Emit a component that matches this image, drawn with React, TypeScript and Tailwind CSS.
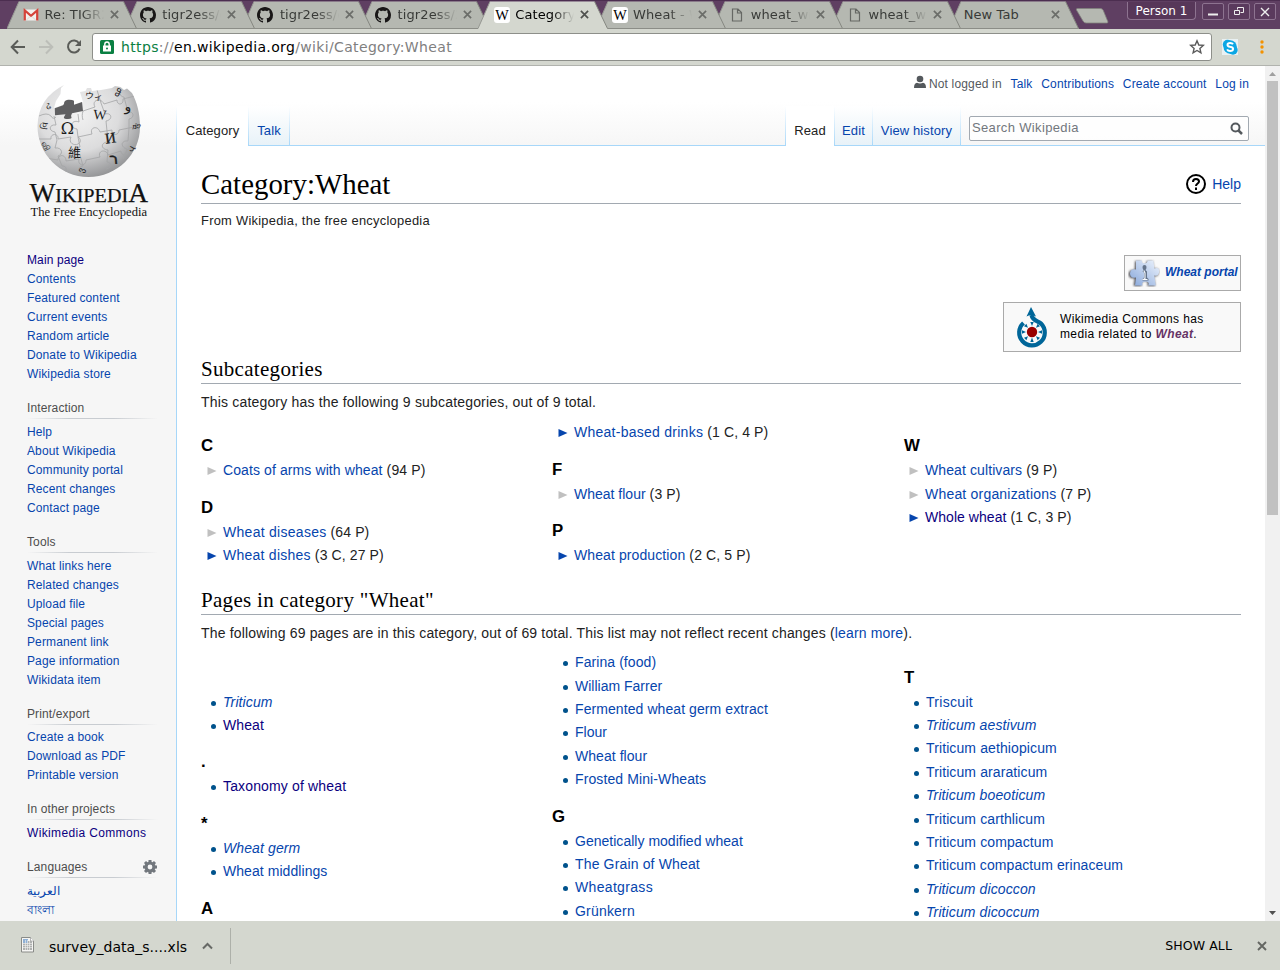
import React from "react";

const SANS = "font-['Liberation_Sans',Arial,sans-serif]";
const SERIF = "font-['Liberation_Serif',serif]";
const UI = "font-['DejaVu_Sans',sans-serif]";

type TabKind = "gmail" | "github" | "wiki" | "file" | "none";

function TabIcon({ kind }: { kind: TabKind }) {
  if (kind === "gmail")
    return (
      <svg width="16" height="16" viewBox="0 0 16 16" className="shrink-0">
        <path d="M1 2.500h14v11H1z" fill="#f3f1ee" />
        <path d="M1.800 13.500V3.500L8 8.800l6.200-5.300v10" fill="none" stroke="#d5433a" strokeWidth="2.200" />
        <path d="M3 13.500l4-4M13 13.500l-4-4" stroke="#d0ccc8" strokeWidth=".7" />
      </svg>
    );
  if (kind === "github")
    return (
      <svg width="16" height="16" viewBox="0 0 16 16" className="-ml-px mr-px shrink-0">
        <path
          fill="#191717"
          d="M8 0C3.58 0 0 3.58 0 8c0 3.54 2.29 6.53 5.47 7.59.4.07.55-.17.55-.38 0-.19-.01-.82-.01-1.49-2.01.37-2.53-.49-2.69-.94-.09-.23-.48-.94-.82-1.13-.28-.15-.68-.52-.01-.53.63-.01 1.08.58 1.23.82.72 1.21 1.87.87 2.33.66.07-.52.28-.87.51-1.07-1.78-.2-3.64-.89-3.64-3.95 0-.87.31-1.59.82-2.15-.08-.2-.36-1.02.08-2.12 0 0 .67-.21 2.2.82.64-.18 1.32-.27 2-.27s1.36.09 2 .27c1.53-1.04 2.2-.82 2.2-.82.44 1.1.16 1.92.08 2.12.51.56.82 1.27.82 2.15 0 3.07-1.87 3.75-3.65 3.95.29.25.54.73.54 1.48 0 1.07-.01 1.93-.01 2.2 0 .21.15.46.55.38A8.01 8.01 0 0 0 16 8c0-4.42-3.58-8-8-8z"
        />
      </svg>
    );
  if (kind === "wiki")
    return (
      <svg width="16" height="16" viewBox="0 0 16 16" className="shrink-0">
        <rect width="16" height="16" rx="3" fill="#fff" />
        <text x="8" y="12.500" textAnchor="middle" fontSize="14" textLength="13.500" lengthAdjust="spacingAndGlyphs" className={SERIF} fill="#000">W</text>
      </svg>
    );
  if (kind === "file")
    return (
      <svg width="16" height="16" viewBox="0 0 16 16" className="shrink-0">
        <path d="M3.500 2h5.500l3.500 3.500v8.500h-9zM8.500 2v4h4" fill="none" stroke="#666864" strokeWidth="1.200" />
      </svg>
    );
  return null;
}

function Cross({ color = "#6b6d69", size = 9 }: { color?: string; size?: number }) {
  return (
    <svg width={size} height={size} viewBox="0 0 9 9" className="shrink-0">
      <path d="M.9.9l7.2 7.2M8.1.9L.9 8.1" stroke={color} strokeWidth="1.700" />
    </svg>
  );
}

const tabs: { kind: TabKind; label: string; layer: string; active?: boolean }[] = [
  { kind: "gmail", label: "Re: TIGR2", layer: "z-[9]" },
  { kind: "github", label: "tigr2ess/c", layer: "z-[8]" },
  { kind: "github", label: "tigr2ess/c", layer: "z-[7]" },
  { kind: "github", label: "tigr2ess/2", layer: "z-[6]" },
  { kind: "wiki", label: "Category:", layer: "z-10", active: true },
  { kind: "wiki", label: "Wheat - W", layer: "z-[5]" },
  { kind: "file", label: "wheat_wi", layer: "z-[4]" },
  { kind: "file", label: "wheat_wi", layer: "z-[3]" },
  { kind: "none", label: "New Tab", layer: "z-[2]" },
];

function BrowserTab({ tab }: { tab: (typeof tabs)[number] }) {
  const fill = tab.active ? "#d4d7cf" : "#b5b8b1";
  return (
    <div className={`relative mr-[-12.3px] h-[29px] w-[130px] shrink-0 ${tab.layer}`}>
      <svg width="130" height="29" viewBox="0 0 130 29" className="absolute inset-0">
        <path d="M0 28.500L12 1.500H116.500L129.500 28.500V29H0z" fill={fill} />
        <path d="M0 28.500L12 1.500" stroke="#969892" fill="none" />
        <path d="M116.500 1.500L129.500 28.500" stroke="#858780" fill="none" />
        {!tab.active && <path d="M0 28.500H130" stroke="#8b8d87" />}
      </svg>
      <div className={`relative flex h-[29px] items-center ${tab.kind === "none" ? "pl-[15px]" : "pl-[16px]"}`}>
        <TabIcon kind={tab.kind} />
        <span
          className={`${UI} h-[18px] whitespace-nowrap text-[13px] leading-[18px] ${
            tab.active ? "text-black" : "text-[#393b38]"
          } ${
            tab.kind === "none"
              ? "mr-px w-[80px] tracking-[0.1px]"
              : "ml-[5.500px] w-[59px] tracking-[0.1px] [mask-image:linear-gradient(to_right,black_62%,transparent)]"
          }`}
        >
          {tab.label}
        </span>
        <span className="ml-[6px] flex h-[29px] items-center">
          <Cross color={tab.active ? "#4f514e" : "#6b6d69"} />
        </span>
      </div>
    </div>
  );
}

function WindowButton({ children }: { children: React.ReactNode }) {
  return (
    <span className="flex h-[17px] w-[22px] items-center justify-center rounded-[2px] border border-[#8d7390] bg-[#5a3a5d]">
      {children}
    </span>
  );
}

function TitleBar() {
  return (
    <div className="flex h-[29px] shrink-0 border-t border-[#4c2e50] bg-[#5f3f62]">
      <div className="mt-[-1px] flex pl-[7px]">
        {tabs.map((t, i) => (
          <BrowserTab key={i} tab={t} />
        ))}
      </div>
      <svg width="34" height="18" viewBox="0 0 34 18" className="ml-[9px] mt-[5px] shrink-0">
        <path d="M2.500 2.500h23q2 0 2.800 2l4.500 11q.5 1.500-1 1.500H11q-2 0-3-2L1.500 4q-.7-1.500 1-1.500z" fill="#b5b8b1" stroke="#80837c" strokeWidth=".8" />
      </svg>
      <div className="ml-auto flex pr-[4px]">
        <div className={`${UI} mr-[6px] mt-px flex h-[18px] w-[69px] items-center justify-center rounded-b-[4px] border border-t-0 border-[#8d7390] bg-[#573759] pt-px text-[12px] text-white`}>
          Person 1
        </div>
        <div className="mt-[2px] flex gap-1">
          <WindowButton>
            <svg width="10" height="10"><path d="M0 7.500h10" stroke="#eee" strokeWidth="2" /></svg>
          </WindowButton>
          <WindowButton>
            <svg width="10" height="9" fill="none" stroke="#eee"><path d="M3.500 2.500v-2h6v5h-3M.5 3.500h5v4h-5z" /></svg>
          </WindowButton>
          <WindowButton>
            <svg width="10" height="10"><path d="M1 1l8 8M9 1L1 9" stroke="#eee" strokeWidth="1.400" /></svg>
          </WindowButton>
        </div>
      </div>
    </div>
  );
}

function Toolbar() {
  return (
    <div className="flex h-[37px] shrink-0 items-start border-b border-[#b1b3ae] bg-[#d4d7cf] pl-[10px] pt-1">
      <svg width="76" height="28" viewBox="0 0 76 28" fill="none" strokeWidth="2">
        <path d="M15 14H2M8 7.500L1.700 14 8 20.500" stroke="#5a5c58" />
        <path d="M29 14h13M36 7.500l6.300 6.500-6.300 6.500" stroke="#bcbeb8" />
        <path d="M69 10.200a6 6 0 1 0 .6 5.500" stroke="#5a5c58" />
        <path d="M71 7v6h-6z" fill="#5a5c58" />
      </svg>
      <div className="ml-[6px] flex h-[28px] w-[1120px] items-center rounded-[3px] border border-[#8d8f8a] bg-white pl-[7px] pr-[6px]">
        <svg width="14" height="14" viewBox="0 0 14 14">
          <rect width="14" height="14" rx="1.500" fill="#0b8043" />
          <path d="M4.800 6V4.200a2.200 2.200 0 0 1 4.400 0V6" fill="none" stroke="#fff" strokeWidth="1.400" />
          <rect x="3" y="5.500" width="8" height="6" fill="#fff" />
          <circle cx="7" cy="8.500" r="1" fill="#0b8043" />
        </svg>
        <span className={`${UI} ml-[7px] whitespace-nowrap text-[14px] tracking-[0.35px] text-[#808080]`}>
          <span className="text-[#0b8043]">https</span>://<span className="text-black">en.wikipedia.org</span>/wiki/Category:Wheat
        </span>
        <svg width="16" height="16" viewBox="0 0 16 16" className="ml-auto">
          <path d="M8 1.800l1.800 4.200 4.500.4-3.400 3 1 4.400L8 11.500l-3.900 2.300 1-4.400-3.400-3L6.200 6z" fill="none" stroke="#5a5a5a" strokeWidth="1.400" />
        </svg>
      </div>
      <svg width="16" height="16" viewBox="0 0 16 16" className="ml-[10px] mt-[6px]">
        <rect width="16" height="16" fill="#e9f1f3" />
        <circle cx="5.500" cy="5.500" r="4.700" fill="#0ca7e4" />
        <circle cx="11" cy="11" r="4.700" fill="#0ca7e4" />
        <circle cx="8.200" cy="8" r="6.700" fill="#0ca7e4" />
        <path d="M11 5.300Q10.300 4 8.200 4 5.500 4 5.500 5.900q0 1.400 2.600 1.900 3 .5 3 2.200 0 2-3 2-2.300 0-3-1.700" fill="none" stroke="#fff" strokeWidth="1.900" />
      </svg>
      <svg width="4" height="14" viewBox="0 0 4 14" className="ml-[22px] mt-[7px]" fill="#f39200">
        <circle cx="2" cy="2" r="1.700" /><circle cx="2" cy="7" r="1.700" /><circle cx="2" cy="12" r="1.700" />
      </svg>
    </div>
  );
}

const BALL =
  "M43 19Q17 32 16.500 60C16.500 88 39 111 67.500 111S119 88 119 61C119 47 116 36 111 27L106 22.500l-3 1.500-3.500-3-5.500-1-3 2-11 2-9 1-1-3h-4l-1.500 3-5.500 1 3 10-9 3v-3.500q-3-3-9 0l-2 3.500-9 3 2-7 4.500-7 .5-6z";

function WikiLogo() {
  return (
    <svg width="135" height="155" viewBox="0 0 135 155" className="mx-auto block">
      <defs>
        <radialGradient id="globe" cx="40%" cy="32%" r="72%">
          <stop offset="0" stopColor="#f2f2f2" />
          <stop offset=".55" stopColor="#dcdcdd" />
          <stop offset="1" stopColor="#8f9092" />
        </radialGradient>
        <clipPath id="ball"><path d={BALL} /></clipPath>
      </defs>
      <path d={BALL} fill="url(#globe)" />
      <g clipPath="url(#ball)" fill="none" stroke="#a3a4a6" strokeWidth=".8">
        <path d="M18 50q8-4 12 0 2 4 5 1M18 73l12 0c-1-6 8-6 7 0l13-2c-3 6 3 9 7 7s2-6 0-7l14-3c-3-7 6-9 8-2l12-2c-1 6 7 6 7 0l20-4" />
        <path d="M24 92l13 2c0-6 8-6 8 1l13-2c-2 7 7 8 7 1l14-3c-3-7 7-8 8-2l13-4c0 5 6 5 6-1l10-5" />
        <path d="M62 45l12-4c-4-7 6-10 9-3l13-4c0 6 7 5 6-1l12-3M62 45c-1 3-1 6 0 9" />
        <path d="M33 50l2 9c-7-1-8 6-1 7l2 8-2 8c7-1 9 6 3 8l4 10c5 0 5 4 3 7" />
        <path d="M57 48l1 8c-8-3-10 6-2 7l1 8 2 10c-7 0-7 8 0 8l3 11c-6 1-5 6 0 8" />
        <path d="M76 24l4 13 4 11c7-2 8 6 1 7l1 10 1 11c-7 0-8 7 0 8l-1 12c6 1 5 6-1 7" />
        <path d="M101 24c-5 4 0 7 2 7l4 15c6-1 7 6 1 7v9l-1 13c-7-1-8 6-1 8l-4 10" />
      </g>
      <path d="M33.800 42.300L42 39.300 43 38q0-4 4-4.300t6 1v4L61 36l1 9-11 2.300-1 2.700q2 3-3 3t-4-2l1.500-2.700L34 49.300z" fill="#5f5f61" />
      <g fill="#1c1c1c" textAnchor="middle">
        <text x="46.500" y="67.500" fontSize="16" className="font-['DejaVu_Serif',serif]">Ω</text>
        <text x="79" y="53.500" fontSize="14" transform="rotate(4 79 49)" className={SERIF}>W</text>
        <text x="89.500" y="77" fontSize="15" transform="rotate(-8 89 72)" className={SERIF} stroke="#1c1c1c" strokeWidth=".3">И</text>
        <text x="53.500" y="91" fontSize="13" className="font-['Noto_Sans_CJK_TC','Noto_Sans_CJK_JP',sans-serif]">維</text>
        <text x="92.500" y="98" fontSize="15" transform="rotate(-4 92 92)" className="font-['DejaVu_Sans',sans-serif]" stroke="#1c1c1c" strokeWidth=".5">ר</text>
        <text x="73" y="33.500" fontSize="9" transform="rotate(8 73 30)" className="font-['Noto_Sans_CJK_JP',sans-serif]">ウィ</text>
        <text x="97" y="30.500" fontSize="10" transform="rotate(24 97 27)" className="font-['DejaVu_Sans',sans-serif]">ჵ</text>
        <text x="107" y="45" fontSize="14" className="font-['DejaVu_Sans',sans-serif]">و</text>
        <text x="27" y="43" fontSize="10" transform="rotate(-20 27 39)" className="font-['DejaVu_Sans',sans-serif]">ઢ</text>
        <text x="23" y="62.500" fontSize="9" transform="rotate(-80 23 59)" className={SERIF}>વિ</text>
        <text x="25" y="83" fontSize="8.500" transform="rotate(65 25 80)" className="font-['DejaVu_Sans',sans-serif]">வி</text>
        <text x="114" y="63" fontSize="8" transform="rotate(80 114 60)" className="font-['DejaVu_Sans',sans-serif]">ཝི</text>
        <text x="60" y="107" fontSize="9" transform="rotate(-70 60 104)" className="font-['DejaVu_Sans',sans-serif]">ვ</text>
        <text x="111" y="86" fontSize="8" transform="rotate(-62 111 83)" className="font-['DejaVu_Sans',sans-serif]">Վ</text>
      </g>
      <g fill="#111" className={SERIF}>
        <text x="8.500" y="135.500" fontSize="26.500" stroke="#111" strokeWidth=".25" textLength="118.500" lengthAdjust="spacingAndGlyphs">
          W<tspan fontSize="19.500">IKIPEDI</tspan>A
        </text>
        <text x="9.500" y="150" fontSize="13.500" textLength="116.500" lengthAdjust="spacingAndGlyphs">The Free Encyclopedia</text>
      </g>
    </svg>
  );
}

const visited = ["Main page", "Wikimedia Commons"];
const portals = [
  { title: "Interaction", items: ["Help", "About Wikipedia", "Community portal", "Recent changes", "Contact page"] },
  { title: "Tools", items: ["What links here", "Related changes", "Upload file", "Special pages", "Permanent link", "Page information", "Wikidata item"] },
  { title: "Print/export", items: ["Create a book", "Download as PDF", "Printable version"] },
  { title: "In other projects", items: ["Wikimedia Commons"] },
  { title: "Languages", items: ["العربية", "বাংলা"] },
];

function NavLinks({ items }: { items: string[] }) {
  return (
    <ul>
      {items.map((t) => (
        <li
          key={t}
          className={`h-[19px] whitespace-nowrap leading-[19px] ${visited.includes(t) ? "text-[#0b0080]" : "text-[#0645ad]"} ${
            t === "Wikimedia Commons" ? "tracking-[0.35px]" : ""
          }`}
        >
          {t}
        </li>
      ))}
    </ul>
  );
}

function Gear() {
  return (
    <svg width="14" height="14" viewBox="0 0 14 14" className="mr-px">
      <circle cx="7" cy="7" r="4" fill="none" stroke="#72777d" strokeWidth="3.200" />
      <g stroke="#72777d" strokeWidth="3">
        <path d="M7 0v2M7 12v2M0 7h2M12 7h2M2 2l1.500 1.500M10.500 10.500L12 12M12 2l-1.500 1.500M3.500 10.500L2 12" />
      </g>
    </svg>
  );
}

function Sidebar() {
  return (
    <aside className={`${SANS} h-full w-[176px] shrink-0 overflow-hidden bg-[#f6f6f6] text-[12px] tracking-[0.12px]`}>
      <div className="-mb-[80px] h-[80px] bg-[linear-gradient(to_bottom,#fff_45%,#f6f6f6)]" />
      <div className="relative h-[185px] tracking-normal">
        <WikiLogo />
      </div>
      <div className="pl-[27px] pr-[18px]">
        <NavLinks items={["Main page", "Contents", "Featured content", "Current events", "Random article", "Donate to Wikipedia", "Wikipedia store"]} />
        {portals.map((p) => (
          <section key={p.title} className="pt-[14px]">
            <h3 className="flex h-[20px] items-center justify-between text-[#4d4d4d]">
              {p.title}
              {p.title === "Languages" && <Gear />}
            </h3>
            <div className="mb-[3.800px] h-px bg-[linear-gradient(to_right,transparent,#c8ccd1_33%,#c8ccd1_66%,transparent)]" />
            <NavLinks items={p.items} />
          </section>
        ))}
      </div>
    </aside>
  );
}

function PageTab({ label, width, active }: { label: string; width: string; active?: boolean }) {
  return (
    <div className={`flex h-10 ${width}`}>
      <div
        className={`flex flex-1 items-end justify-center ${
          active
            ? "bg-white pb-[6px] text-[#222]"
            : "border-b border-[#a7d7f9] bg-[linear-gradient(to_top,#e8f2f8,#fff)] pb-[5px] text-[#0645ad]"
        }`}
      >
        {label}
      </div>
      <div className="w-px bg-[linear-gradient(to_bottom,#fff,#a7d7f9)]" />
    </div>
  );
}

function PageHead() {
  return (
    <div className={`${SANS} flex h-[80px] flex-col bg-[linear-gradient(to_bottom,#fff_45%,#f6f6f6)]`}>
      <div className="flex h-10 justify-end gap-[8.700px] pr-4 pt-[9px] text-[12px] leading-[18px] tracking-[0.17px] text-[#0645ad]">
        <span className="flex gap-[3px] text-[#54595d]">
          <svg width="12" height="14" viewBox="0 0 12 14" fill="#54595d">
            <circle cx="6" cy="4" r="3.300" /><path d="M0 13q0-5 3-5.300 3 1.600 6 0 3 .3 3 5.300z" />
          </svg>
          Not logged in
        </span>
        <span>Talk</span><span>Contributions</span><span>Create account</span><span>Log in</span>
      </div>
      <div className="flex h-10 text-[13px] tracking-[0.12px]">
        <div className="w-px bg-[linear-gradient(to_bottom,#fff,#a7d7f9)]" />
        <PageTab label="Category" width="w-[72px]" active />
        <PageTab label="Talk" width="w-[41px]" />
        <div className="flex-1 border-b border-[#a7d7f9]" />
        <div className="w-px bg-[linear-gradient(to_bottom,#fff,#a7d7f9)]" />
        <PageTab label="Read" width="w-[49px]" active />
        <PageTab label="Edit" width="w-[38px]" />
        <PageTab label="View history" width="w-[88px]" />
        <div className="flex w-[304px] justify-start border-b border-[#a7d7f9] pl-2 pt-[10px]">
          <div className="flex h-[25px] w-[280px] items-center justify-between rounded-[2px] border border-[#a2a9b1] bg-white/80 pb-px pl-[2px] pr-[5px] text-[13px] text-[#72777d]">
            <span className="tracking-[0.350px]">Search Wikipedia</span>
            <svg width="13" height="13" viewBox="0 0 13 13" fill="none" stroke="#54595d">
              <circle cx="5.500" cy="5.500" r="4" strokeWidth="2" /><path d="M8.500 8.500l3.500 3.500" strokeWidth="2.500" />
            </svg>
          </div>
        </div>
      </div>
    </div>
  );
}

function Letter({ children }: { children?: React.ReactNode }) {
  return <h3 className="h-[38px] pt-[13.700px] text-[16.8px] font-bold leading-[23px] tracking-normal text-black">{children}</h3>;
}

type Sub = { name: string; count: string; open?: boolean; seen?: boolean; spacing?: string };
function SubItem({ name, count, open, seen, spacing = "tracking-[0.1px]" }: Sub) {
  return (
    <div className="flex h-[23.4px] items-center pl-[6px] leading-[22px]">
      <svg width="10" height="8" viewBox="0 0 10 8" className="mr-[6px] mt-[2px]">
        <path d="M.5 0l9 4-9 4z" fill={open ? "#0645ad" : "#c0c0c0"} />
      </svg>
      <span className={`${spacing} ${seen ? "text-[#0b0080]" : "text-[#0645ad]"}`}>{name}</span>
      <span className="whitespace-pre tracking-[0.12px]"> ({count})</span>
    </div>
  );
}

type Entry = { name: string; italic?: boolean; seen?: boolean; spacing?: string };
function PageItem({ name, italic, seen, spacing = "tracking-[0.11px]" }: Entry) {
  return (
    <li className="flex h-[23.4px] items-center pl-[10px] leading-[22px]">
      <span className="mr-[7px] mt-[3px] h-[5px] w-[5px] rounded-full bg-[#00528c]" />
      <span className={`${spacing} ${italic ? "italic" : ""} ${seen ? "text-[#0b0080]" : "text-[#0645ad]"}`}>{name}</span>
    </li>
  );
}

function Heading({ children }: { children: React.ReactNode }) {
  return (
    <h2 className={`${SERIF} h-[29px] border-b border-[#a2a9b1] pt-px text-[21px] leading-[27px] tracking-[0.3px] text-black`}>{children}</h2>
  );
}

function PortalBox() {
  return (
    <div className="ml-auto flex h-[36px] w-[117px] items-center border border-[#aaa] bg-[#f9f9f9] pl-[3px] text-[12px] font-bold italic text-[#0645ad]">
      <svg width="32" height="28" viewBox="0 0 32 28" className="mr-[5px] shrink-0">
        <defs>
          <linearGradient id="piece" x1="1" y1="0" x2="0" y2="1">
            <stop offset="0" stopColor="#eef4fd" /><stop offset="1" stopColor="#86a6da" />
          </linearGradient>
          <filter id="soft"><feGaussianBlur stdDeviation=".8" /></filter>
        </defs>
        <path d="M8 1.500h6q-1 4 2.500 4t3-4h6l1 8q5-2 5 3-.5 5-5 4l1.500 10h-8q2-5-2.500-5t-3 5H6.500l1-8q-6 1-6-4 .5-5 6-4z" fill="#4a4a50" filter="url(#soft)" transform="translate(-.8 .6)" />
        <path d="M8 1.500h6q-.5 3 2.500 3t3-3h6l.8 8q5-2 5 3-.5 5-5 4l1.500 10h-7.500q1.500-4-2.800-4t-3 4H7l1-8q-6 1-6-4 .5-5 6-4z" fill="url(#piece)" />
        <path d="M14.500 8q0-2 2-2t2 2-1 3l1.500 1.500v6l1.500 1.500v1.500h-6V20l1.500-1.500v-5l-1.500-1 1-1.500q-1-1-1-3z" fill="#65748a" />
        <path d="M15.800 11.500l1.200 2.500v5.500l-1.500 1h4" fill="none" stroke="#f8fbff" strokeWidth="1.100" />
      </svg>
      <span className="whitespace-nowrap pb-[2px]">Wheat portal</span>
    </div>
  );
}

function CommonsBox() {
  return (
    <div className="ml-auto mt-[11px] flex h-[50px] w-[238px] items-center border border-[#aaa] bg-[#f9f9f9] pl-[12px] text-[12px] leading-[15px] tracking-[0.36px] text-black">
      <svg width="32" height="42" viewBox="0 0 32 42" className="mb-[1px] mr-[12px] shrink-0">
        <circle cx="16" cy="26" r="5.200" fill="#900" />
        <path d="M7.500 17a12.800 12.800 0 1 0 17.500 .5c-3.500-2.500-8.500-3-9.500-8.500" fill="none" stroke="#069" strokeWidth="4.200" />
        <path d="M15 1l5 9.500Q15 7.500 10.500 10.500z" fill="#069" />
        <path d="M14.300 36l1.700-4.500 1.700 4.500zM6 24.300l4 1.700-4 1.700zM26 24.300L22 26l4 1.700zM8 31.800l4-1.600-1.600 4zM24 31.800l-4-1.600 1.600 4zM8 20.200l4 1.600-1.600-4zM24 20.200l-4 1.600 1.600-4zM14.300 16l1.700 4 1.700-4z" fill="#069" />
      </svg>
      <div className="whitespace-nowrap">
        Wikimedia Commons has<br />media related to <b className="italic text-[#663366]">Wheat</b>.
      </div>
    </div>
  );
}

function Article() {
  return (
    <main className={`${SANS} flex-1 overflow-hidden border-l border-[#a7d7f9] bg-white pl-6 pr-6 text-[14px] text-[#222]`}>
      <div className="flex h-[58px] items-end justify-between border-b border-[#a2a9b1]">
        <h1 className={`${SERIF} pb-[2px] text-[28.8px] leading-[34px] tracking-[0.05px] text-black`}>Category:Wheat</h1>
        <div className="flex items-center gap-[6px] pb-[9px] leading-5 text-[#0645ad]">
          <svg width="20" height="20" viewBox="0 0 20 20" fill="none" stroke="#000">
            <circle cx="10" cy="10" r="9" strokeWidth="2" />
            <path d="M7 8q0-3 3-3t3 2.500c0 2-3 2-3 4.500M10 13.500V16" strokeWidth="2" />
          </svg>
          Help
        </div>
      </div>
      <div className="h-[51px] pt-[7px] text-[12.9px] leading-[20px] tracking-[0.260px]">From Wikipedia, the free encyclopedia</div>
      <PortalBox />
      <CommonsBox />
      <div className="mt-[3px]"><Heading>Subcategories</Heading></div>
      <p className="h-[36.600px] pt-[7px] leading-[22px] tracking-[0.18px]">This category has the following 9 subcategories, out of 9 total.</p>
      <div className="grid h-[165.400px] grid-cols-[351px_352px_1fr]">
        <div>
          <Letter>C</Letter>
          <SubItem name="Coats of arms with wheat" count="94 P" />
          <Letter>D</Letter>
          <SubItem name="Wheat diseases" count="64 P" spacing="tracking-[0.28px]" />
          <SubItem name="Wheat dishes" count="3 C, 27 P" open spacing="tracking-[0.25px]" />
        </div>
        <div>
          <SubItem name="Wheat-based drinks" count="1 C, 4 P" open spacing="tracking-[0.26px]" />
          <Letter>F</Letter>
          <SubItem name="Wheat flour" count="3 P" spacing="tracking-normal" />
          <Letter>P</Letter>
          <SubItem name="Wheat production" count="2 C, 5 P" open />
        </div>
        <div className="-ml-px">
          <div className="pl-px"><Letter>W</Letter></div>
          <SubItem name="Wheat cultivars" count="9 P" />
          <SubItem name="Wheat organizations" count="7 P" spacing="tracking-[0.2px]" />
          <SubItem name="Whole wheat" count="1 C, 3 P" open seen spacing="tracking-[0.05px]" />
        </div>
      </div>
      <Heading>Pages in category "Wheat"</Heading>
      <p className="h-[35.600px] pt-[7px] leading-[22px] tracking-[0.165px]">
        The following 69 pages are in this category, out of 69 total. This list may not reflect recent changes (
        <span className="text-[#0645ad]">learn more</span>).
      </p>
      <div className="grid grid-cols-[351px_352px_1fr]">
        <ul className="pt-[1.300px]">
          <Letter />
          <PageItem name="Triticum" italic />
          <PageItem name="Wheat" seen />
          <Letter>.</Letter>
          <PageItem name="Taxonomy of wheat" seen spacing="tracking-[0.15px]" />
          <Letter>*</Letter>
          <PageItem name="Wheat germ" italic />
          <PageItem name="Wheat middlings" spacing="tracking-[0.06px]" />
          <Letter>A</Letter>
        </ul>
        <ul className="[&_li]:pl-[11px]">
          <PageItem name="Farina (food)" spacing="tracking-[0.08px]" />
          <PageItem name="William Farrer" spacing="tracking-normal" />
          <PageItem name="Fermented wheat germ extract" spacing="tracking-[0.08px]" />
          <PageItem name="Flour" spacing="tracking-normal" />
          <PageItem name="Wheat flour" spacing="tracking-[0.05px]" />
          <PageItem name="Frosted Mini-Wheats" />
          <Letter>G</Letter>
          <PageItem name="Genetically modified wheat" spacing="tracking-[0.02px]" />
          <PageItem name="The Grain of Wheat" spacing="tracking-[0.15px]" />
          <PageItem name="Wheatgrass" spacing="tracking-[0.33px]" />
          <PageItem name="Grünkern" spacing="tracking-[0.2px]" />
        </ul>
        <ul className="pt-[1.300px]">
          <Letter>T</Letter>
          <PageItem name="Triscuit" spacing="tracking-[0.3px]" />
          <PageItem name="Triticum aestivum" italic />
          <PageItem name="Triticum aethiopicum" />
          <PageItem name="Triticum araraticum" />
          <PageItem name="Triticum boeoticum" italic />
          <PageItem name="Triticum carthlicum" />
          <PageItem name="Triticum compactum" />
          <PageItem name="Triticum compactum erinaceum" spacing="tracking-[0.08px]" />
          <PageItem name="Triticum dicoccon" italic />
          <PageItem name="Triticum dicoccum" italic />
        </ul>
      </div>
    </main>
  );
}

function Scrollbar() {
  return (
    <div className="flex w-[15px] shrink-0 flex-col items-center bg-[#f1f1f1]">
      <svg width="15" height="15"><path d="M4 10l3.500-4L11 10z" fill="#a0a0a0" /></svg>
      <div className="h-[434px] w-[11px] bg-[#c1c1c1]" />
      <svg width="15" height="15" className="mt-auto"><path d="M4 5l3.500 4L11 5z" fill="#505050" /></svg>
    </div>
  );
}

function DownloadShelf() {
  return (
    <div className={`${UI} flex h-[49px] shrink-0 items-center bg-[#d4d7cf] pr-[13px] text-black`}>
      <div className="flex h-[36px] w-[231px] items-center border-r border-[#adb0a9] pl-5">
        <svg width="16" height="18" viewBox="0 0 16 18" className="mb-[2px]">
          <path d="M1.500 1.500h9l3 3.500v11h-12z" fill="#f5f5f3" stroke="#898b88" />
          <path d="M10.500 1.500V5H14" fill="#fff" stroke="#999" strokeWidth=".7" />
          <path d="M3 5h9v9H3z" fill="#aeb0af" />
          <rect x="3" y="3" width="5" height="4" fill="#8fb0d5" />
          <path d="M3 7.500h9M3 9.500h9M3 11.500h9M5.500 4v10M7.500 4v10M9.500 5v9" stroke="#f1f1f0" strokeWidth=".6" />
        </svg>
        <span className="ml-[13px] w-[139px] whitespace-nowrap pt-[3px] text-[14px] tracking-[0.05px]">survey_data_s....xls</span>
        <svg width="11" height="8" viewBox="0 0 11 8" className="ml-[14px]" fill="none"><path d="M1 6.500L5.500 2 10 6.500" stroke="#676966" strokeWidth="2" /></svg>
      </div>
      <span className="ml-auto mr-[25px] whitespace-nowrap pt-px text-[12.500px] tracking-[0.1px]">SHOW ALL</span>
      <Cross size={10} color="#646662" />
    </div>
  );
}

export default function App() {
  return (
    <div className="flex h-[970px] w-[1280px] flex-col overflow-hidden bg-white">
      <TitleBar />
      <Toolbar />
      <div className="flex h-[855px] shrink-0">
        <Sidebar />
        <div className="flex w-[1089px] flex-col overflow-hidden">
          <PageHead />
          <Article />
        </div>
        <Scrollbar />
      </div>
      <DownloadShelf />
    </div>
  );
}
